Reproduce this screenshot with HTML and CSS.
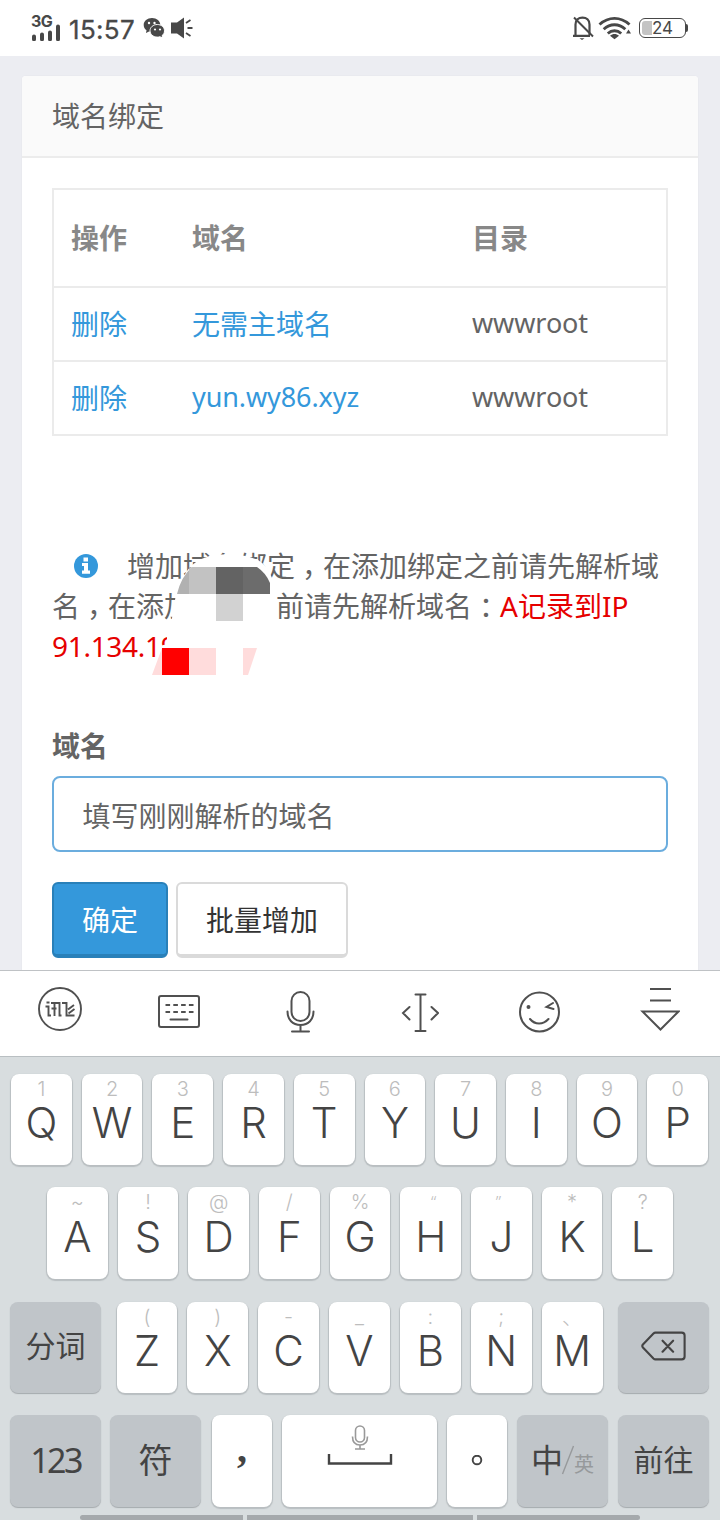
FILE: index.html
```html
<!DOCTYPE html>
<html lang="zh-CN">
<head>
<meta charset="utf-8">
<title>域名绑定</title>
<link rel="stylesheet" href="styles.css">
</head>
<body>
<header class="status">
  <div class="network">
    <span class="network-type">3G</span>
    <svg class="bars" width="30" height="17" viewBox="0 0 30 17"><path d="M2 12.500v2.700M10 10.500v4.700M18 8.500v6.700M26 2.500v12.700" stroke="#484848" stroke-width="4" stroke-linecap="round"/></svg>
  </div>
  <time class="clock">15:57</time>
  <svg class="wechat" width="22" height="22" viewBox="0 0 22 22">
    <path d="M9 1C4.300 1 .700 4 .700 8c0 2.200 1 4 2.800 5.300L3 16l3-1.400c1 .300 2 .400 3 .400 4.700 0 8.300-3 8.300-7S13.700 1 9 1z" fill="#484848"/>
    <circle cx="6" cy="6" r="1.200" fill="#fff"/><circle cx="11.500" cy="6" r="1.200" fill="#fff"/>
    <path d="M14.300 7.500c-4.100 0-7.300 2.800-7.300 6.300s3.200 6.300 7.300 6.300c.900 0 1.800-.1 2.600-.4l2.700 1.300-.5-2.400c1.500-1.100 2.400-2.800 2.400-4.800 0-3.500-3.100-6.300-7.200-6.300z" fill="#484848" stroke="#fff"/>
    <circle cx="12" cy="12.500" r="1.100" fill="#fff"/><circle cx="17" cy="12.500" r="1.100" fill="#fff"/>
  </svg>
  <svg class="speaker" width="22" height="22" viewBox="0 0 22 22"><path d="M0 5.500h6l7-5v21l-7-5H0z" fill="#484848"/><path d="M15 6l4.500-3M16.500 11H21.500M15 16l4.500 3" stroke="#484848" stroke-width="1.800"/></svg>
  <div class="status-right">
    <svg width="22" height="26" viewBox="0 0 22 26" fill="none" stroke="#484848" stroke-width="2.200"><path d="M3.500 20V9.500C3.500 5 6.500 2.600 10.500 2.600s7 2.400 7 6.900V20M1 20.800h17"/><path d="M2 2.500L21 21.500" stroke-width="1.900"/><path d="M7.500 23.200h5L10 25z" fill="#484848" stroke="none"/></svg>
    <svg class="wifi" width="34" height="24" viewBox="0 0 34 24" fill="none" stroke="#484848" stroke-width="2.900"><path d="M1.500 8.500c9-8.200 21-8.200 30 0M5.700 13.200c6.500-6 15.100-6 21.600 0M9.800 17.500c4-3.700 9.400-3.700 13.400 0"/><path d="M16.500 23.300l-4.500-3.600c2.800-2.300 6.200-2.300 9 0z" fill="#484848" stroke="none"/><path d="M30.500 13.500l2.500 4h-5z" fill="#484848" stroke="none"/></svg>
    <div class="battery"><span class="battery-fill"></span><span>24</span></div>
    <span class="battery-tip"></span>
  </div>
</header>

<main class="page">
  <section class="card">
    <h1 class="card-title">域名绑定</h1>
    <div class="card-body">
      <table class="domains">
        <thead><tr><th class="col-action">操作</th><th class="col-domain">域名</th><th>目录</th></tr></thead>
        <tbody>
          <tr><td><a>删除</a></td><td><a>无需主域名</a></td><td class="latin">wwwroot</td></tr>
          <tr><td><a>删除</a></td><td class="latin"><a>yun.wy86.xyz</a></td><td class="latin">wwwroot</td></tr>
        </tbody>
      </table>
      <p class="notice">
        <svg class="info" width="24" height="24" viewBox="0 0 24 24"><circle cx="12" cy="12" r="12" fill="#3498db"/><path d="M9.500 3.600h4.500v3.800H9.500zM8 9h6v7.500h2v3.200H8v-3.200h2v-4.500H8z" fill="#fff"/></svg>增加域名绑定<span class="punct">，</span>在添加绑定之前请先解析域<br>名<span class="punct">，</span>在添加绑定之前请先解析域名<span class="punct">：</span><span class="record">A记录到IP<br><span class="ip">91.134.19</span></span>
        <svg class="mosaic" width="130" height="130" viewBox="150 550 130 130">
          <path d="M176 594L184 576Q193 558 216 555Q240 552 258 560Q272 568 276 594L277 624H171Z" fill="#fff"/>
          <path d="M167 632V644L160 646V650H184V632Z" fill="#fff"/>
          <path d="M177 594Q181 577 192 567H189V594Z" fill="#b1b1b1"/>
          <path d="M189 570L192 567H216V594H189Z" fill="#c2c2c2"/>
          <path d="M216 567H243V594H216Z" fill="#636363"/>
          <path d="M243 567H257Q266 573 270 583V594H243Z" fill="#6c6c6c"/>
          <path d="M216 594H243V621H216Z" fill="#d2d2d2"/>
          <path d="M162 648H189V675H162Z" fill="#f00"/>
          <path d="M189 648H216V675H189ZM162 648V675H152ZM243 648H257L248 675H243Z" fill="#ffdcdc"/>
        </svg>
      </p>
      <label class="label" for="domain">域名</label>
      <input class="field" id="domain" type="text" placeholder="填写刚刚解析的域名">
      <div class="actions">
        <button class="btn btn-primary">确定</button>
        <button class="btn">批量增加</button>
      </div>
    </div>
  </section>
</main>

<nav class="toolbar">
  <svg class="brand" width="46" height="46" viewBox="0 0 46 46" fill="none" stroke="#505050" stroke-width="1.900"><circle cx="23" cy="23" r="21"/><path d="M9.500 16.500h3M8.500 20.500h3v9h2.500M14 17h8.500v12.500h2M17.500 17v13M14.500 22.500h5M25 17h4.500v12.500h8M31 23.500l6-4.500M31.500 27.500l6-4.500"/></svg>
  <svg class="layout" width="42" height="46" viewBox="0 0 42 46" fill="none" stroke="#505050" stroke-width="2"><rect x="1" y="9" width="40" height="31" rx="2"/><path d="M7.500 18h28M7.500 25h28" stroke-dasharray="4.600 3.200"/><path d="M12.500 32.500h17" stroke-linecap="round"/></svg>
  <svg width="30" height="46" viewBox="0 0 30 46" fill="none" stroke="#505050" stroke-width="2" stroke-linecap="round"><rect x="6.500" y="5" width="18" height="29" rx="9"/><path d="M2.500 24.500c0 8 5 13.500 13 13.500s13-5.500 13-13.500M15.500 38.500V44.500M7 44.500h17"/></svg>
  <svg width="38" height="46" viewBox="0 0 38 46" fill="none" stroke="#505050" stroke-width="2" stroke-linecap="round"><path d="M19.500 7.500V44M14.500 7.500h10M14.500 44h10M8.500 20L2 26l6.500 6.500M30.500 20l6.500 6-6.500 6.500"/></svg>
  <svg width="42" height="46" viewBox="0 0 42 46" fill="none" stroke="#505050" stroke-width="2" stroke-linecap="round"><circle cx="20.500" cy="25" r="19.500"/><path d="M11 32c5 6 13 6 18.500 0M34 16l-6.500 4 7 2"/><circle cx="9.500" cy="20" r="1" fill="#505050"/></svg>
  <svg width="40" height="46" viewBox="0 0 40 46" fill="none" stroke="#505050" stroke-width="2"><path d="M10 2h21M10 13.500h21M2.500 24.500h36L20.500 42.500z"/></svg>
</nav>

<section class="keyboard">
  <div class="keys">
    <div class="key"><small>1</small>Q</div><div class="key"><small>2</small>W</div><div class="key"><small>3</small>E</div><div class="key"><small>4</small>R</div><div class="key"><small>5</small>T</div><div class="key"><small>6</small>Y</div><div class="key"><small>7</small>U</div><div class="key"><small>8</small>I</div><div class="key"><small>9</small>O</div><div class="key"><small>0</small>P</div>
  </div>
  <div class="keys keys-home">
    <div class="key"><small>~</small>A</div><div class="key"><small>!</small>S</div><div class="key"><small>@</small>D</div><div class="key"><small>/</small>F</div><div class="key"><small>%</small>G</div><div class="key"><small class="open-quote">“</small>H</div><div class="key"><small class="close-quote">”</small>J</div><div class="key"><small>*</small>K</div><div class="key"><small>?</small>L</div>
  </div>
  <div class="keys keys-lower">
    <div class="key fn">分词</div>
    <div class="letters">
      <div class="key"><small>(</small>Z</div><div class="key"><small>)</small>X</div><div class="key"><small>-</small>C</div><div class="key"><small>_</small>V</div><div class="key"><small>:</small>B</div><div class="key"><small>;</small>N</div><div class="key"><small class="cjk">、</small>M</div>
    </div>
    <div class="key fn"><svg width="46" height="32" viewBox="0 0 48 32" fill="none" stroke="#444" stroke-width="2.200" stroke-linejoin="round"><path d="M15 2h27.500q3 0 3 3v22q0 3-3 3H15q-1 0-2-1L2 17.500q-1.300-1.500 0-3L13 3q1-1 2-1zM22.500 10.500l11 11.500M33.500 10.500L22.500 22" stroke-linecap="round"/></svg></div>
  </div>
  <div class="keys keys-bottom">
    <div class="key fn num">123</div>
    <div class="key fn symbol">符</div>
    <div class="key mark comma">,</div>
    <div class="key space">
      <svg width="66" height="44" viewBox="0 0 66 44" fill="none"><g stroke="#999" stroke-width="1.600"><rect x="28.500" y="1" width="9" height="16" rx="4.500"/><path d="M25.500 11.500c0 5.500 3 8.500 7.500 8.500s7.500-3 7.500-8.500M33 20v4M28 24h10"/></g><path d="M2 29v9.500h62V29" stroke="#444" stroke-width="2.400"/></svg>
    </div>
    <div class="key mark"><svg width="12" height="12" viewBox="0 0 12 12"><circle cx="6" cy="5" r="4.300" fill="none" stroke="#444" stroke-width="1.900"/></svg></div>
    <div class="key fn lang"><span>中</span><svg width="14" height="32" viewBox="0 0 14 32"><path d="M1.500 30L12.500 2" stroke="#96999b" stroke-width="1.400"/></svg><span class="lang-off">英</span></div>
    <div class="key fn">前往</div>
  </div>
  <div class="gesture"><span></span><span class="mid"></span><span></span></div>
</section>
</body>
</html>
```

FILE: styles.css
```css
* { box-sizing: border-box; }
body { margin: 0; width: 720px; height: 1520px; overflow: hidden; background: #ecedf2; color: #646464; font: 28px/40px "Noto Sans", "Noto Sans CJK SC", sans-serif; }
svg { display: block; flex: none; }

.status { height: 56px; background: #fff; color: #484848; display: flex; align-items: center; padding: 0 32px 0 31px; font-family: Inter, sans-serif; }
.network { width: 30px; height: 28px; }
.network-type { display: block; padding-top: 1px; font: 700 16px/13px Inter, sans-serif; letter-spacing: -.6px; }
.bars { margin: -4px 0 0 1px; }
.clock { margin-left: 8px; width: 66px; font: 400 26px/32px Inter, sans-serif; letter-spacing: .3px; padding-top: 3px; -webkit-text-stroke: .3px #484848; }
.wechat { margin-left: 8px; }
.speaker { margin-left: 6px; }
.status-right { margin-left: auto; display: flex; align-items: center; }
.wifi { margin: 0 7px 0 4px; }
.battery { width: 47px; height: 20px; border: 1.500px solid #484848; border-radius: 6px; display: flex; align-items: center; padding-left: 2px; font: 400 17px/18px Inter, sans-serif; }
.battery-fill { width: 10px; height: 14px; border-radius: 3px 0 0 3px; background: #c4c4c4; }
.battery-tip { width: 2px; height: 8px; background: #484848; border-radius: 0 2px 2px 0; }

.page { height: 914px; padding: 20px 22px 0; overflow: hidden; }
.card { height: 960px; background: #fff; border-radius: 4px; box-shadow: 0 0 0 1px #e9eaef; }
.card-title { margin: 0; height: 82px; padding: 20px 30px; background: #fafafa; border-bottom: 2px solid #ececec; border-radius: 4px 4px 0 0; font-size: 28px; font-weight: 400; line-height: 40px; }
.card-body { padding: 30px; }

.domains { width: 616px; height: 248px; border-collapse: collapse; table-layout: fixed; border: 2px solid #ebebeb; }
.domains th, .domains td { padding: 0 0 0 17px; border-bottom: 2px solid #ebebeb; text-align: left; height: 74px; }
.domains th { height: 98px; font-weight: 700; color: #888; }
.domains .col-action { width: 122px; }
.domains .col-domain { width: 280px; }
.domains .latin { font-size: 27px; letter-spacing: -.1px; line-height: 38px; padding-bottom: 2px; }
.domains a { color: #3498db; }

.notice { position: relative; margin: 110px 0 60px; white-space: nowrap; }
.info { display: inline-block; vertical-align: -1px; margin: 0 29px 0 22px; }
.punct { padding-left: 7px; margin-right: -7px; }
.record { color: #e60000; }
.ip { letter-spacing: -.3px; }
.mosaic { position: absolute; left: 98px; top: 4px; }

.label { display: block; font-weight: 700; }
.field { display: block; width: 616px; height: 76px; margin: 10px 0 30px; padding: 3px 28.500px 0; border: 2px solid #6badde; border-radius: 8px; font: inherit; background: #fff; }
.field::placeholder { color: #646464; opacity: 1; }
.actions { display: flex; gap: 8px; }
.btn { height: 76px; padding: 2px 28px 0; border: 2px solid #dadada; border-bottom-width: 4px; border-radius: 6px; background: #fff; color: #333; font: inherit; }
.btn-primary { background: #3498db; border-color: #2980b9; color: #fff; }

.toolbar { height: 86px; background: #fff; border-top: 1px solid #bfc2c5; display: grid; grid-template-columns: repeat(6, 120px); justify-items: center; padding-top: 16px; }
.brand { margin-top: -1px; }
.layout { margin-left: -2px; }

.keyboard { height: 464px; background: #d8dddf; border-top: 1px solid #b9bfc2; padding: 17px 12px 0 11px; color: #444; }
.keys { display: flex; gap: 10px; height: 91px; margin-bottom: 22px; }
.key { flex: 1; min-width: 0; background: #fff; border-radius: 8px; box-shadow: 0 1px 1px 1px #b9bec1; display: flex; flex-direction: column; align-items: center; font: 300 42px/42px Inter, sans-serif; }
.key small { font-size: 20px; line-height: 20px; height: 20px; margin: 5px 0 3px; color: #bdbdbd; }
.keys-home { padding: 0 35px 0 36px; height: 92px; margin-bottom: 23px; }
.keys-home .key small { margin-bottom: 4px; }
.key .open-quote, .key .close-quote { font-family: "Noto Sans", sans-serif; font-size: 17px; }
.key .open-quote { padding-left: 6px; }
.key .close-quote { padding-right: 6px; }
.keys-lower { gap: 15.500px; height: 91px; }
.letters { flex: 1; display: flex; gap: 10px; }
.keys .fn { flex: none; width: 91px; background: #c0c5c9; box-shadow: 0 1px 1px #a5aaad; justify-content: center; padding-bottom: 3px; font: 400 30px/40px "Noto Sans", "Noto Sans CJK SC", sans-serif; }
.key .cjk { font-family: "Noto Sans CJK SC", sans-serif; }
.keys-bottom { height: 92px; margin-bottom: 8px; }
.keys-lower, .keys-bottom { margin-left: -1px; margin-right: -1px; }
.keys .num { font-size: 34px; letter-spacing: -2.600px; }
.keys .symbol { font-size: 34px; margin-left: -1px; margin-right: 1px; }
.keys .mark { flex: 0 0 60px; justify-content: center; }
.keys .comma { font: 700 40px/40px "Liberation Serif", serif; padding-bottom: 24px; }
.space { padding-top: 10px; }
.keys .lang { flex-direction: row; align-items: center; font-size: 32px; }
.lang svg { margin: 0 -1px 0 -2px; }
.lang-off { font-size: 20px; color: #96999b; padding-top: 10px; }
.gesture { width: 560px; height: 5px; margin: 0 0 0 69px; display: flex; gap: 4px; }
.gesture span { flex: 1; background: #a5a9ac; }
.gesture span:first-child { border-radius: 3px 0 0 3px; }
.gesture span:last-child { border-radius: 0 3px 3px 0; }
.gesture .mid { flex: 0 0 226px; }
```
